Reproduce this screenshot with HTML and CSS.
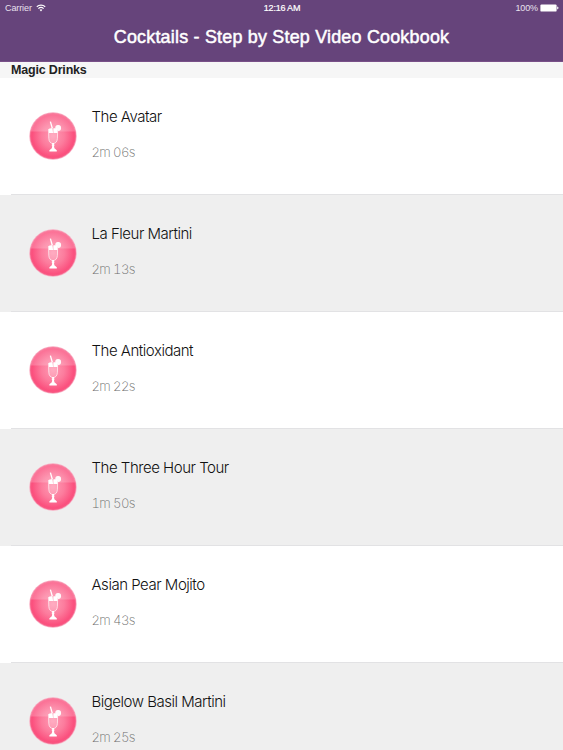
FILE: index.html
```html
<!DOCTYPE html>
<html lang="en">
<head>
<meta charset="utf-8">
<title>Cocktails - Step by Step Video Cookbook</title>
<link rel="stylesheet" href="styles.css">
</head>
<body>
<svg class="defs" aria-hidden="true">
  <defs>
    <radialGradient id="pink" cx="50%" cy="50%" r="50%">
      <stop offset="0" stop-color="#ff9ab4"/>
      <stop offset=".5" stop-color="#fc7c9d"/>
      <stop offset=".92" stop-color="#fb4f7d"/>
      <stop offset="1" stop-color="#f65e87"/>
    </radialGradient>
  </defs>
  <symbol id="drink" viewBox="0 0 48 48">
    <circle cx="24" cy="24" r="23.7" fill="#f9a9bf"/>
    <circle cx="24" cy="24" r="22.9" fill="url(#pink)"/>
    <path d="M1.6 19.5a22.8 22.8 0 0 1 44.8 0z" fill="#fff" fill-opacity=".2"/>
    <path d="M21.4 9.6l1.9 6.7" fill="none" stroke="#fff" stroke-width="1.3"/>
    <path d="M19.9 16.7l3.4-.7.8 5h-4.2zM24.4 16.2h3.8l.3 4.8h-4.1z" fill="#fff"/>
    <path d="M26.3 16.4a2.9 2.9 0 1 1 2.8 2.5l-1.2-1.6z" fill="#fff" fill-opacity=".93"/>
    <path d="M19.5 17l.3 9.5c.2 3.2 1.8 4.9 4.3 5.2 2.5-.3 4.1-2 4.3-5.2l.3-9.5" fill="#fff" fill-opacity=".18" stroke="#fff" stroke-opacity=".8" stroke-width=".8"/>
    <path d="M23.1 31h2l-.2 1.3.8.8-.7 1 .4 2.2 2.4 2v1.1h-7.4v-1.1l2.4-2 .4-2.2-.7-1 .8-.8z" fill="#fff"/>
  </symbol>
</svg>
<header class="navbar">
  <div class="status">
    <span class="carrier">Carrier
      <svg class="wifi" viewBox="0 0 10 8"><path d="M.8 2.7a6.2 6.2 0 0 1 8.4 0M2.4 4.6a3.8 3.8 0 0 1 5.2 0" fill="none" stroke="#fff" stroke-width="1.2"/><path d="M3.6 5.8a2.1 2.1 0 0 1 2.8 0L5 7.4z" fill="#fff"/></svg>
    </span>
    <span class="time">12:16 AM</span>
    <span class="power"><span class="percent">100%</span>
      <svg class="battery" viewBox="0 0 19 8"><rect x=".4" y=".4" width="16.2" height="7.2" rx="1.2" fill="#fff"/><path d="M17.2 2.6q1.3.4 1.3 1.4t-1.3 1.4z" fill="#fff"/></svg>
    </span>
  </div>
  <h1 class="title">Cocktails - Step by Step Video Cookbook</h1>
</header>
<main>
  <h2 class="section">Magic Drinks</h2>
  <ul class="list">
    <li class="row"><svg class="icon"><use href="#drink"/></svg><div class="info"><h3 class="name">The Avatar</h3><p class="duration">2m 06s</p></div></li>
    <li class="row"><svg class="icon"><use href="#drink"/></svg><div class="info"><h3 class="name">La Fleur Martini</h3><p class="duration">2m 13s</p></div></li>
    <li class="row"><svg class="icon"><use href="#drink"/></svg><div class="info"><h3 class="name">The Antioxidant</h3><p class="duration">2m 22s</p></div></li>
    <li class="row"><svg class="icon"><use href="#drink"/></svg><div class="info"><h3 class="name">The Three Hour Tour</h3><p class="duration">1m 50s</p></div></li>
    <li class="row"><svg class="icon"><use href="#drink"/></svg><div class="info"><h3 class="name">Asian Pear Mojito</h3><p class="duration">2m 43s</p></div></li>
    <li class="row"><svg class="icon"><use href="#drink"/></svg><div class="info"><h3 class="name">Bigelow Basil Martini</h3><p class="duration">2m 25s</p></div></li>
  </ul>
</main>
</body>
</html>
```
FILE: styles.css
```css
* { box-sizing: border-box; margin: 0; padding: 0; }
html, body { height: 750px; overflow: hidden; }
body { background: #fff; color: #111; font-family: "Liberation Sans", Arial, sans-serif; }
.defs { position: absolute; width: 0; height: 0; }
.navbar { height: 62px; background: #66447b; border-bottom: 1px solid #795088; color: #fff; }
.status { display: grid; grid-template-columns: 1fr auto 1fr; height: 16px; padding: 0 4px 0 5px; align-items: center; font-size: 9px; line-height: 16px; }
.carrier, .power { display: flex; align-items: center; gap: 4px; }
.carrier { color: #e9e1ee; letter-spacing: -.1px; }
.wifi { width: 10px; height: 8px; }
.time { -webkit-text-stroke: .2px #fff; letter-spacing: -.2px; }
.power { justify-content: flex-end; gap: 2px; color: #e9e1ee; letter-spacing: -.1px; }
.battery { width: 19px; height: 8px; }
.title { height: 42px; font-size: 17.9px; font-weight: 400; line-height: 42px; text-align: center; -webkit-text-stroke: .5px #fff; letter-spacing: .22px; white-space: nowrap; }
.section { height: 16px; padding-left: 11px; background: #f6f6f6; color: #222; font-size: 12.5px; line-height: 17px; font-weight: 700; letter-spacing: -.18px; }
.list { list-style: none; }
.row { position: relative; display: flex; height: 117px; padding: 34px 0 0 29px; gap: 14.5px; }
.row:nth-child(even) { background: #efefef; }
.row::after { content: ""; position: absolute; left: 11px; right: 0; bottom: 0; height: 1px; background: #e2e2e4; }
.icon { width: 48px; height: 48px; flex: none; }
.name { height: 35px; margin-top: -5px; font-family: Inter, "Liberation Sans", sans-serif; font-size: 15px; font-weight: 300; line-height: 20px; white-space: nowrap; letter-spacing: -.48px; }
.duration { color: #6c6c6c; font-family: Inter, "Liberation Sans", sans-serif; font-size: 13.2px; font-weight: 200; line-height: 20px; letter-spacing: -.65px; font-variant-numeric: tabular-nums; }
```
